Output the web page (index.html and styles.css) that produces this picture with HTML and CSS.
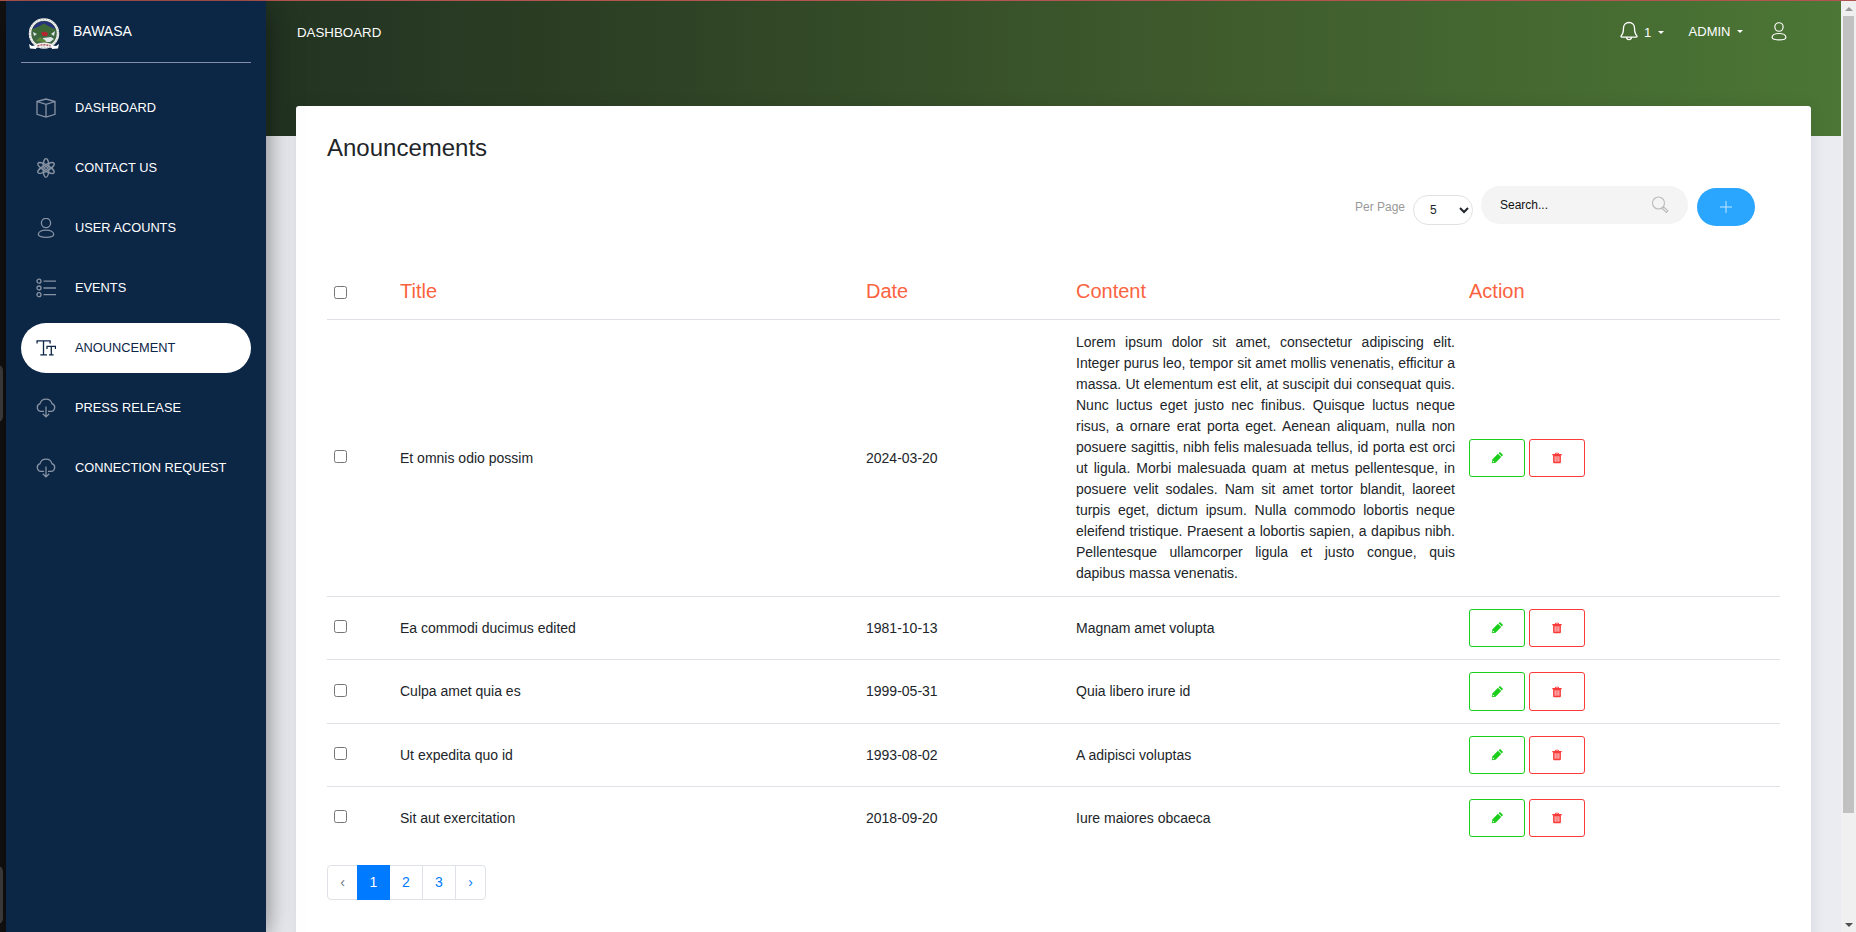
FILE: index.html
```html
<!DOCTYPE html>
<html lang="en">
<head>
<meta charset="utf-8">
<title>Anouncements</title>
<link rel="stylesheet" href="styles.css">
</head>
<body>
<svg class="defs" width="0" height="0" aria-hidden="true">
  <symbol id="cloud" viewBox="0 0 20 20"><path d="M8 13.400H4.500A4 4 0 0 1 4 5.700 6.200 6.200 0 0 1 16 5.700a4 4 0 0 1-.5 7.700H12M10 8.400v10.300M6.800 15.800l3.200 3.100 3.200-3.100"/></symbol>
  <symbol id="user" viewBox="0 0 20 20"><ellipse cx="10" cy="5" rx="4.600" ry="4.700"/><path d="M2.300 16.600C2.300 14 5.500 12.200 10 12.200s7.700 1.800 7.700 4.400c0 3.600-15.400 3.600-15.400 0z"/></symbol>
  <symbol id="pencil" viewBox="0 0 12 12"><path fill-rule="evenodd" d="M.7 11.300l.6-3.900L6.900 1.800l3.300 3.300-5.600 5.600zM1.900 8.600l-.2 1.700 1.700-.2zM7.600 1.200l.8-.8q.6-.6 1.200 0l2 2q.6.600 0 1.200l-.8.8z"/></symbol>
  <symbol id="trash" viewBox="0 0 12 12"><path fill-rule="evenodd" d="M1.300 2h2.600l.6-1.300h3L8.100 2h2.600v1.200h-.8V10q0 1.300-1 1.300H3.100q-1 0-1-1.300V3.200h-.8zM5 2h2l-.3-.5H5.300zM3.700 4.300v5.500h.8V4.300zm1.900 0v5.500h.8V4.300zm1.900 0v5.500h.8V4.300z"/></symbol>
</svg>
<div class="screen">
  <div class="edge"><i class="edge-tab upper"></i><i class="edge-tab lower"></i></div>
  <aside class="sidebar">
    <div class="brand">
      <svg class="logo" viewBox="0 0 32 32"><circle cx="16" cy="15.500" r="14" fill="#3f6840" stroke="#f1f1ed" stroke-width="2.500"/><circle cx="16" cy="15.500" r="14.300" fill="none" stroke="#99a4a6" stroke-width="1" stroke-dasharray="1 2"/><path d="M4.500 11a12.400 12.400 0 0 1 23 0L16 6.500z" fill="#28317c"/><path d="M5 13l5-4 6-3.500 6 3.500 5 4-4 4H7z" fill="#3c6737"/><path d="M5 14l4 2-3 2zm22-1l-4 3 3 2zM15 20l8-1 3 2-4 3h-7z" fill="#dce6e8"/><path d="M13 15l3-1.500 4 1.500-1 3h-4z" fill="#b72430"/><path d="M8 23l4-4 5 3 2 3z" fill="#5f863f"/><path d="M8 26q8-3 16 0v4q-8-3-16 0z" fill="#f2eeee"/><path d="M9.500 28q6.500-2.500 13 0" stroke="#a6545b" stroke-width="1.500" stroke-dasharray="2 1" fill="none"/><path d="M1 26l3 2 5-1-1 4-6-.5zm30 0l-3 2-5-1 1 4 6-.5z" fill="#fff"/></svg>
      <span>BAWASA</span>
    </div>
    <nav class="menu">
      <a class="item"><svg class="icon" viewBox="0 0 20 20"><path d="M1 3.500L10 1l9 2.500v12.800L10 19l-9-2.700zM1 3.500L10 6.300l9-2.800M10 6.300V19"/></svg>DASHBOARD</a>
      <a class="item"><svg class="icon" viewBox="0 0 20 20"><ellipse cx="10" cy="10" rx="3" ry="9.300"/><ellipse cx="10" cy="10" rx="3" ry="9.300" transform="rotate(60 10 10)"/><ellipse cx="10" cy="10" rx="3" ry="9.300" transform="rotate(120 10 10)"/><circle cx="10" cy="10" r="1.500"/></svg>CONTACT US</a>
      <a class="item"><svg class="icon"><use href="#user"/></svg>USER ACOUNTS</a>
      <a class="item"><svg class="icon" viewBox="0 0 20 20"><path d="M7.500 3.200H20M7.500 10H20M7.500 16.700H20"/><circle cx="3" cy="3.200" r="2"/><circle cx="3" cy="10" r="2"/><circle cx="3" cy="16.700" r="2"/></svg>EVENTS</a>
      <a class="item active"><svg class="icon" viewBox="0 0 20 20"><path d="M1.100 5.500V2.800h13v2.700M7.500 2.800v14M4.300 16.900H11M11 11V8.300h8.500V11M15.300 8.300v8.500M13 16.900h4.600"/></svg>ANOUNCEMENT</a>
      <a class="item"><svg class="icon"><use href="#cloud"/></svg>PRESS RELEASE</a>
      <a class="item"><svg class="icon"><use href="#cloud"/></svg>CONNECTION REQUEST</a>
    </nav>
  </aside>
  <main class="main">
    <header class="topbar">
      <span class="crumb">DASHBOARD</span>
      <div class="tools">
        <span class="alerts"><svg class="bell" viewBox="0 0 18 20"><path d="M9 1.500C5.500 1.500 3.500 4 3.500 7c0 4-.5 6-2.300 7.800-.6.700-.1 1.400.6 1.400h14.400c.7 0 1.200-.7.600-1.400C15 13 14.500 11 14.500 7c0-3-2-5.500-5.500-5.500zM6.500 16.500c.3 2.700 4.700 2.700 5 0"/></svg>1<i class="caret"></i></span>
        <span class="account">ADMIN<i class="caret"></i></span>
        <svg class="profile"><use href="#user"/></svg>
      </div>
    </header>
    <section class="card">
      <h1>Anouncements</h1>
      <div class="filters">
        <label class="per-page">Per Page</label>
        <select class="count"><option>5</option></select>
        <div class="search"><span>Search...</span><svg viewBox="0 0 18 18"><circle cx="7.500" cy="7" r="6"/><path d="M11.200 12.500l1.500-1.500 4.200 3.800-1.500 1.700z"/></svg></div>
        <button class="add" aria-label="Add"><svg viewBox="0 0 12 12"><path d="M6 0v12M0 6h12"/></svg></button>
      </div>
      <table class="list">
        <colgroup><col class="c-check"><col class="c-title"><col class="c-date"><col class="c-content"><col></colgroup>
        <thead><tr><th><input type="checkbox"></th><th>Title</th><th>Date</th><th>Content</th><th>Action</th></tr></thead>
        <tbody>
          <tr><td><input type="checkbox"></td><td>Et omnis odio possim</td><td>2024-03-20</td><td class="body">Lorem ipsum dolor sit amet, consectetur adipiscing elit. Integer purus leo, tempor sit amet mollis venenatis, efficitur a massa. Ut elementum est elit, at suscipit dui consequat quis. Nunc luctus eget justo nec finibus. Quisque luctus neque risus, a ornare erat porta eget. Aenean aliquam, nulla non posuere sagittis, nibh felis malesuada tellus, id porta est orci ut ligula. Morbi malesuada quam at metus pellentesque, in posuere velit sodales. Nam sit amet tortor blandit, laoreet turpis eget, dictum ipsum. Nulla commodo lobortis neque eleifend tristique. Praesent a lobortis sapien, a dapibus nibh. Pellentesque ullamcorper ligula et justo congue, quis dapibus massa venenatis.</td><td><div class="actions"><button class="edit"><svg><use href="#pencil"/></svg></button><button class="delete"><svg><use href="#trash"/></svg></button></div></td></tr>
          <tr><td><input type="checkbox"></td><td>Ea commodi ducimus edited</td><td>1981-10-13</td><td>Magnam amet volupta</td><td><div class="actions"><button class="edit"><svg><use href="#pencil"/></svg></button><button class="delete"><svg><use href="#trash"/></svg></button></div></td></tr>
          <tr class="tall"><td><input type="checkbox"></td><td>Culpa amet quia es</td><td>1999-05-31</td><td>Quia libero irure id</td><td><div class="actions"><button class="edit"><svg><use href="#pencil"/></svg></button><button class="delete"><svg><use href="#trash"/></svg></button></div></td></tr>
          <tr><td><input type="checkbox"></td><td>Ut expedita quo id</td><td>1993-08-02</td><td>A adipisci voluptas</td><td><div class="actions"><button class="edit"><svg><use href="#pencil"/></svg></button><button class="delete"><svg><use href="#trash"/></svg></button></div></td></tr>
          <tr><td><input type="checkbox"></td><td>Sit aut exercitation</td><td>2018-09-20</td><td>Iure maiores obcaeca</td><td><div class="actions"><button class="edit"><svg><use href="#pencil"/></svg></button><button class="delete"><svg><use href="#trash"/></svg></button></div></td></tr>
        </tbody>
      </table>
      <div class="pages"><a class="muted">‹</a><a class="current">1</a><a class="after">2</a><a>3</a><a>›</a></div>
    </section>
  </main>
  <div class="scrollbar"><i class="up"></i><i class="thumb"></i><i class="down"></i></div>
</div>
</body>
</html>
```
FILE: styles.css
```css
* { box-sizing: border-box; }
body { margin: 0; font-family: "Liberation Sans", Arial, sans-serif; font-size: 14px; color: #212529; overflow: hidden; }
.defs { position: absolute; }
.screen { display: flex; height: 932px; border-top: 1px solid #b25550; background: #ebecf1; }
.edge { position: relative; width: 6px; background: #131313; }
.edge-tab { position: absolute; left: -8px; width: 11px; background: #454545; border-radius: 6px; }
.upper { top: 364px; height: 57px; }
.lower { top: 865px; height: 58px; }

.sidebar { position: relative; z-index: 1; width: 260px; padding: 0 15px; background: #0c2646; color: #fff; box-shadow: 0 10px 30px -5px rgba(0,0,0,.56), 0 4px 25px rgba(0,0,0,.12); }
.brand { display: flex; align-items: center; height: 62px; padding: 0 0 0 7px; border-bottom: 1px solid #858fa7; font-size: 14px; }
.brand span { margin: 0 0 1px 13px; }
.logo { width: 32px; height: 32px; margin-top: 4px; }
.menu { display: flex; flex-direction: column; gap: 10px; padding-top: 20px; }
.item { display: flex; align-items: center; height: 50px; padding: 0 0 2px 15px; border-radius: 25px; font-size: 12.8px; }
.icon { width: 20px; height: 20px; margin: 1px 19px 0 0; fill: none; stroke: #8793a3; stroke-width: 1.3; }
.active { background: #fff; color: #0c2646; }
.active .icon { stroke: #0c2646; }

.main { flex: 1; overflow: hidden; padding: 0 30px; background: linear-gradient(90deg, #233422, #2c4024 22%, #3d582c 55%, #4b7635) 0 0 / 100% 135px no-repeat; }
.topbar { display: flex; justify-content: space-between; align-items: flex-start; height: 105px; padding: 24px 23px 0 1px; color: #fff; font-size: 13px; line-height: 15px; }
.crumb { font-size: 13.3px; }
.tools, .alerts, .account { display: flex; align-items: center; }
.tools { margin-top: -3px; }
.alerts { margin-top: 1px; }
.bell { width: 18px; height: 20px; margin: -2px 6px 0 0; }
.bell, .profile { fill: none; stroke: #fff; stroke-width: 1.3; }
.caret { border: 3px solid transparent; border-top-color: #fff; border-bottom: 0; margin-left: 6.5px; }
.account { margin: -1px 27px 0 25px; }
.profile { width: 18px; height: 19px; }

.card { height: 900px; padding: 27px 31px 0; border-radius: 3px 3px 0 0; background: #fff; box-shadow: 0 1px 15px rgba(39,39,39,.1); }
h1 { margin: 0; font-size: 24px; font-weight: 400; line-height: 30px; }
.filters { display: flex; justify-content: flex-end; align-items: flex-start; height: 78px; margin-top: 23px; padding-right: 25px; }
.per-page { margin: 14px 8px 0 0; color: #999; font-size: 12px; line-height: 15px; }
.count { width: 60px; height: 30px; margin: 9px 8px 0 0; padding: 0 0 0 12px; border: 1px solid #e2e2e2; border-radius: 15px; background: #fff; color: #212529; font: 12px "Liberation Sans", sans-serif; }
.search { display: flex; align-items: center; justify-content: space-between; width: 207px; height: 38px; padding: 0 19px; border-radius: 19px; background: #f4f4f4; color: #111; font-size: 12px; }
.search svg { width: 18px; height: 18px; fill: none; stroke: #bbb; stroke-width: 1.1; }
.add { display: grid; place-items: center; width: 58px; height: 38px; margin: 2px 0 0 9px; padding: 0; border: 0; border-radius: 19px; background: #2ba6ff; }
.add svg { width: 12px; height: 12px; stroke: #c6e6ff; stroke-width: 1; }

.list { width: 100%; table-layout: fixed; border-collapse: separate; border-spacing: 0; }
.c-check { width: 66px; }
.c-title { width: 466px; }
.c-date { width: 210px; }
.c-content { width: 393px; }
th { height: 55px; padding: 0 7px; color: #fb6340; font-size: 20px; font-weight: 400; text-align: left; }
td { height: 63px; padding: 0 7px; border-top: 1px solid #dee2e6; line-height: 21px; }
td.body { padding: 12px 7px; text-align: justify; }
input { display: block; width: 13px; height: 13px; margin: 0; }
td input { margin-bottom: 3px; }
th input { margin-top: 2px; }
.actions { display: flex; gap: 4px; }
.actions button { display: grid; place-items: center; width: 56px; height: 38px; padding: 0; border: 1px solid #1bce1b; border-radius: 3px; background: #fff; }
.tall td { height: 64px; }
.tall button { height: 39px; }
.actions svg { width: 12px; height: 12px; fill: #1bce1b; }
.actions .delete { border-color: #fb3a3a; }
.actions .delete svg { fill: #fb3a3a; }

.pages { display: flex; width: max-content; height: 35px; margin-top: 16px; border: 1px solid #dee2e6; border-radius: 4px; color: #007bff; line-height: 33px; text-align: center; }
.pages a { width: 33px; border-left: 1px solid #dee2e6; }
.pages .muted { width: 29px; border: 0; color: #6c757d; }
.pages .current { margin: -1px 0; border: 0; background: #007bff; color: #fff; line-height: 35px; }
.pages .after { width: 32px; border: 0; }
.pages a:last-child { width: 30px; }

.scrollbar { position: relative; width: 15px; background: #f0f0f0; }
.thumb { position: absolute; top: 15px; left: 2px; width: 11px; height: 797px; background: #c1c1c1; }
.up, .down { position: absolute; left: 4px; border: 4px solid transparent; }
.up { top: 6px; border-top: 0; border-bottom-color: #999; }
.down { bottom: 5px; border-bottom: 0; border-top-color: #505050; }
```
